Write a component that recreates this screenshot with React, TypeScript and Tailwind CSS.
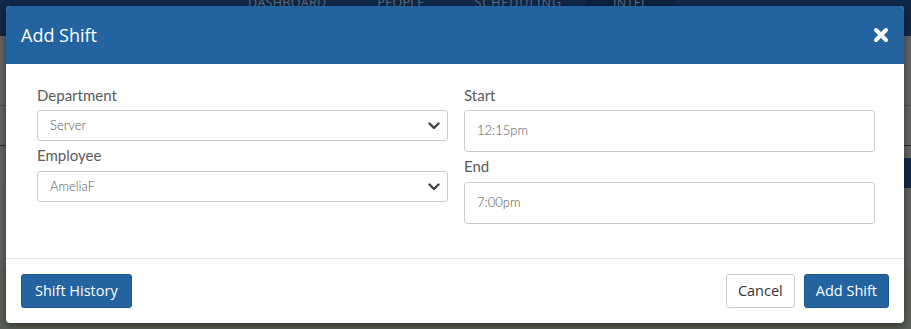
import React from "react";

function Chevron() {
  return (
    <svg width="12" height="8" viewBox="0 0 12 8" className="shrink-0">
      <path d="M1.5 1.5 L6 6 L10.5 1.5" fill="none" stroke="#444" strokeWidth="2.4" strokeLinecap="round" strokeLinejoin="round" />
    </svg>
  );
}

function CloseIcon() {
  return (
    <svg width="16" height="16" viewBox="0 0 16 16">
      <path d="M3 3 L13 13 M13 3 L3 13" fill="none" stroke="#fff" strokeWidth="4" strokeLinecap="round" />
    </svg>
  );
}

const bodyFont = { fontFamily: "Lato, 'Noto Sans', sans-serif" };

export default function App() {
  return (
    <div className="relative w-[911px] h-[329px] overflow-hidden bg-[#606160]">
      {/* background page under overlay */}
      <div className="flex flex-col h-full">
        <div className="h-[36px] bg-[#11284a] relative">
          <div
            className="absolute top-[-6px] left-0 flex items-end text-[12.5px] tracking-wide text-[#5f6f85]"
            style={{ fontFamily: "'Open Sans', sans-serif" }}
          >
            <span className="ml-[248px]">DASHBOARD</span>
            <span className="ml-[51px]">PEOPLE</span>
            <span className="ml-[50px] tracking-[0.08em]">SCHEDULING</span>
            <span className="ml-[25px] pl-[26px] pr-[28px] bg-[#0d2140]">INTEL</span>
          </div>
        </div>
        <div className="flex-1 flex flex-col">
          <div className="h-[70px] border-b border-[#505250] bg-[#646564]"></div>
          <div className="h-[40px] border-b border-[#232f40] bg-[#656565]"></div>
          <div className="h-[12px] bg-[#656565]"></div>
          <div className="h-[30px] flex bg-[#646564]">
            <div className="flex-1"></div>
            <div className="w-[20px] bg-[#12294a]"></div>
          </div>
          <div className="h-[80px] bg-[#626461]"></div>
          <div className="flex-1 bg-[#5d6259]"></div>
        </div>
      </div>

      {/* modal */}
      <div className="absolute left-[6px] top-[6px] w-[898px] h-[317px] bg-white rounded-[4px] overflow-hidden shadow-[0_3px_9px_rgba(0,0,0,0.5)] flex flex-col">
        <div className="h-[58px] bg-[#2363a0] flex items-center justify-between pl-[15px] pr-[15px] shrink-0">
          <span className="text-white text-[18px]" style={{ fontFamily: "'Open Sans', sans-serif" }}>
            Add Shift
          </span>
          <CloseIcon />
        </div>

        <div className="h-[195px] shrink-0 border-b border-[#e5e5e5] pl-[31px] pr-[29px] pt-[21px]" style={bodyFont}>
          <div className="grid grid-cols-2 gap-x-[16px]">
            <div className="flex flex-col">
              <label className="h-[21px] leading-[21px] text-[15px] text-[#5a5a5a] mb-[4px]">Department</label>
              <div className="h-[31px] border border-[#ccc] rounded-[3px] flex items-center justify-between pl-[12px] pr-[7px] text-[13px] font-light text-[#555]">
                <span>Server</span>
                <Chevron />
              </div>
              <label className="h-[21px] leading-[21px] text-[15px] text-[#5a5a5a] mt-[4px] mb-[5px]">Employee</label>
              <div className="h-[31px] border border-[#ccc] rounded-[3px] flex items-center justify-between pl-[12px] pr-[7px] text-[13px] font-light text-[#555]">
                <span>AmeliaF</span>
                <Chevron />
              </div>
            </div>
            <div className="flex flex-col">
              <label className="h-[21px] leading-[21px] text-[15px] text-[#5a5a5a] mb-[4px]">Start</label>
              <div className="h-[42px] border border-[#ccc] rounded-[3px] flex items-center pl-[12px] text-[13px] font-light text-[#555]">
                12:15pm
              </div>
              <label className="h-[21px] leading-[21px] text-[15px] text-[#5a5a5a] mt-[4px] mb-[5px]">End</label>
              <div className="h-[42px] border border-[#ccc] rounded-[3px] flex items-center pl-[12px] text-[13px] font-light text-[#555]">
                7:00pm
              </div>
            </div>
          </div>
        </div>

        <div className="flex-1 flex items-center justify-between px-[15px]" style={{ fontFamily: "'Open Sans', sans-serif" }}>
          <button className="h-[34px] px-[13px] bg-[#2363a0] border border-[#1d558b] rounded-[3px] text-white text-[14.5px]">
            Shift History
          </button>
          <div className="flex gap-[9px]">
            <button className="h-[34px] px-[11px] bg-white border border-[#ccc] rounded-[3px] text-[#333] text-[14.5px]">
              Cancel
            </button>
            <button className="h-[34px] px-[11px] bg-[#2363a0] border border-[#1d558b] rounded-[3px] text-white text-[14.5px]">
              Add Shift
            </button>
          </div>
        </div>
      </div>
    </div>
  );
}
